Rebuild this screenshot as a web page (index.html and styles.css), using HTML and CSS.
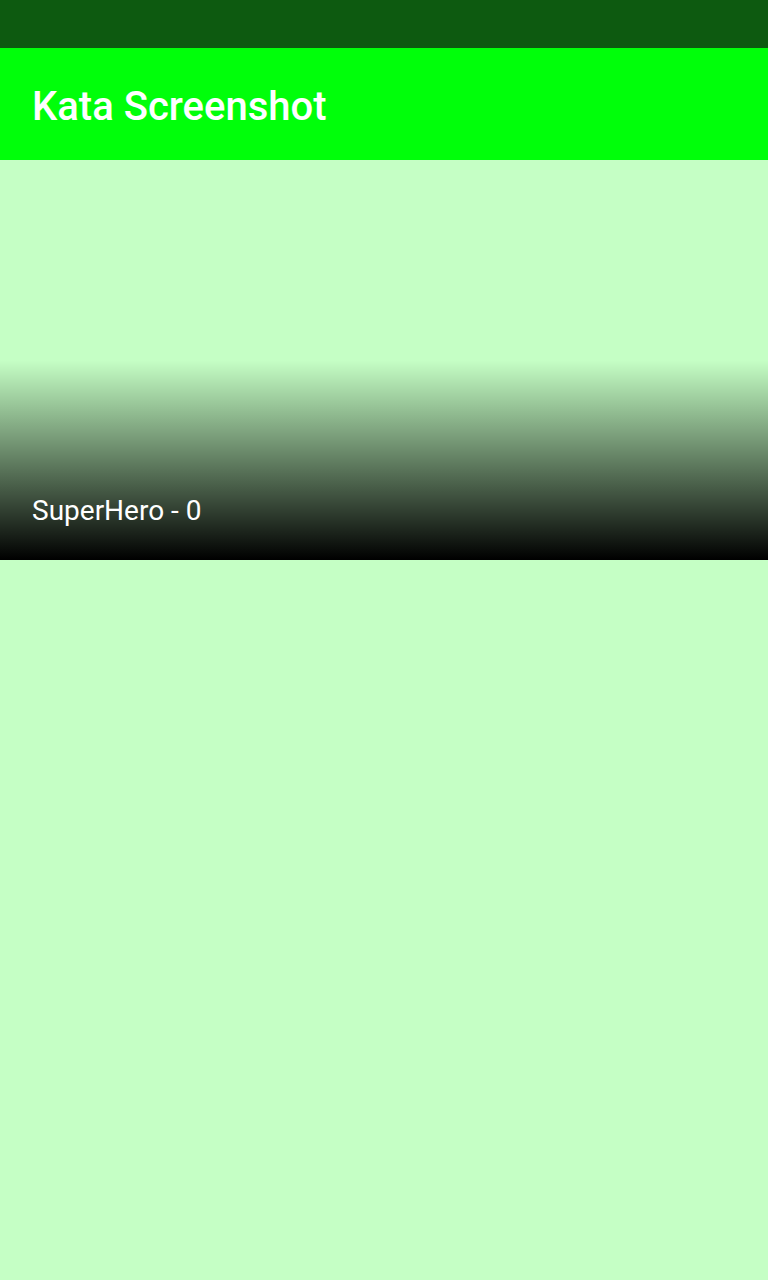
FILE: index.html
```html
<!DOCTYPE html>
<html>
<head>
<meta charset="utf-8">
<link rel="stylesheet" href="styles.css">
</head>
<body>
<div class="status-bar"></div>
<header class="app-bar"><h1 class="title">Kata Screenshot</h1></header>
<main class="content">
  <div class="hero-card">
    <span class="hero-name">SuperHero - 0</span>
  </div>
</main>
</body>
</html>
```
FILE: styles.css
```css
html, body {
  margin: 0;
  padding: 0;
  height: 100%;
  background: #c5ffc5;
  font-family: Roboto, "Noto Sans", sans-serif;
}
.status-bar {
  height: 48px;
  background: #0d5a10;
}
.app-bar {
  height: 112px;
  background: #00ff0a;
  display: flex;
  align-items: center;
  padding: 6px 32px 0;
  box-sizing: border-box;
}
.title {
  margin: 0;
  color: #ffffff;
  font-size: 40px;
  font-weight: 500;
  line-height: 40px;
}
.content {
  background: #c5ffc5;
}
.hero-card {
  height: 400px;
  box-sizing: border-box;
  padding: 0 32px 35px;
  display: flex;
  flex-direction: column;
  justify-content: flex-end;
  background: linear-gradient(to bottom, rgba(0,0,0,0) 50%, rgba(0,0,0,1) 100%);
}
.hero-name {
  color: #ffffff;
  font-size: 28px;
  line-height: 28px;
}
```
